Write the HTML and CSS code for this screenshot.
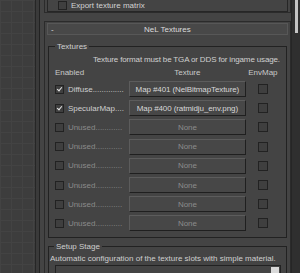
FILE: index.html
```html
<!DOCTYPE html>
<html lang="en">
<head>
    <meta charset="UTF-8" />
    <title>NeL Textures</title>
    <link rel="stylesheet" href="styles.css">
</head>
<body>
    <div class="screen">
        <div class="viewport"></div>
        <div class="strip"></div>
        <div class="panel">
            <div class="prev">
                <div class="prev-group">
                    <label class="opt"><span class="box"></span>Export texture matrix</label>
                </div>
            </div>
            <div class="rollout">
                <div class="roll-head"><span class="minus">-</span><span class="title">NeL Textures</span></div>
                <fieldset class="group textures">
                    <legend>Textures</legend>
                    <p class="info">Texture format must be TGA or DDS for ingame usage.</p>
                    <div class="slots">
                        <div class="col-head">Enabled</div>
                        <div class="col-head center">Texture</div>
                        <div class="col-head center">EnvMap</div>

                        <label class="opt on"><span class="box checked"></span>Diffuse..............</label>
                        <button class="map">Map #401 (NelBitmapTexture)</button>
                        <div class="env"><span class="box"></span></div>

                        <label class="opt on"><span class="box checked"></span>SpecularMap....</label>
                        <button class="map">Map #400 (ratmidju_env.png)</button>
                        <div class="env"><span class="box"></span></div>

                        <label class="opt"><span class="box"></span>Unused............</label>
                        <button class="map none">None</button>
                        <div class="env"><span class="box"></span></div>

                        <label class="opt"><span class="box"></span>Unused............</label>
                        <button class="map none">None</button>
                        <div class="env"><span class="box"></span></div>

                        <label class="opt"><span class="box"></span>Unused............</label>
                        <button class="map none">None</button>
                        <div class="env"><span class="box"></span></div>

                        <label class="opt"><span class="box"></span>Unused............</label>
                        <button class="map none">None</button>
                        <div class="env"><span class="box"></span></div>

                        <label class="opt"><span class="box"></span>Unused............</label>
                        <button class="map none">None</button>
                        <div class="env"><span class="box"></span></div>

                        <label class="opt"><span class="box"></span>Unused............</label>
                        <button class="map none">None</button>
                        <div class="env"><span class="box"></span></div>
                    </div>
                </fieldset>
                <fieldset class="group setup">
                    <legend>Setup Stage</legend>
                    <p class="auto">Automatic configuration of the texture slots with simple material.</p>
                    <div class="setup-row"><span class="knob"></span></div>
                </fieldset>
            </div>
        </div>
        <div class="scrollbar"><div class="thumb"></div></div>
    </div>
</body>
</html>
```

FILE: styles.css
```css
body {
    margin: 0;
    background: #444;
    color: #c8c8c8;
    font-family: "Liberation Sans", Arial, sans-serif;
    font-size: 8px;
    overflow: hidden;
}
.screen {
    display: flex;
    height: 273px;
    overflow: hidden;
}
.viewport {
    width: 39px;
    border-right: 1px solid #262626;
    background-color: #3d3d3d;
    background-image:
        linear-gradient(to right, #434343 1px, transparent 1px),
        linear-gradient(to bottom, #434343 1px, transparent 1px);
    background-size: 11px 11px;
}
.strip {
    width: 3px;
    background: #3a3a3a;
    border-right: 1px solid #222;
}
.panel {
    flex: 1;
    padding-left: 4px;
    display: flex;
    flex-direction: column;
}

/* previous rollout, scrolled mostly out of view */
.prev {
    height: 15px;
    border: 1px solid #2b2b2b;
    border-top: none;
    padding: 0 2px 0 2px;
    margin-bottom: 8px;
}
.prev-group {
    height: 11px;
    border: 1px solid #262626;
    border-top: none;
    padding-left: 10px;
}
.opt {
    display: flex;
    align-items: center;
    gap: 4px;
    color: #8a8a8a;
    white-space: nowrap;
}
.prev-group .opt {
    color: #d2d2d2;
    height: 11px;
}
.opt.on { color: #cfcfcf; }
.box {
    flex: none;
    display: inline-block;
    box-sizing: border-box;
    width: 9px;
    height: 9px;
    border: 1px solid #222;
    background: #3f3f3f;
    position: relative;
}
.box.checked::after {
    content: "";
    position: absolute;
    left: 2px;
    top: 0px;
    width: 2px;
    height: 4px;
    border: solid #e6e6e6;
    border-width: 0 1px 1px 0;
    transform: rotate(40deg);
}

/* NeL Textures rollout */
.rollout {
    flex: 1;
    border: 1px solid #2b2b2b;
    border-bottom: none;
    padding: 1px 2px 0 2px;
}
.roll-head {
    box-sizing: border-box;
    height: 12px;
    border: 1px solid #575757;
    background: #484848;
    display: flex;
    align-items: center;
    position: relative;
    color: #dcdcdc;
}
.minus {
    padding-left: 3px;
}
.title {
    position: absolute;
    left: 0;
    right: 0;
    text-align: center;
}
.group {
    margin: 7px 1px 0 1px;
    padding: 0 6px 0 6px;
    border: 1px solid #222;
    min-width: 0;
}
.group legend {
    padding: 0 2px;
    margin-left: 0;
    color: #cfcfcf;
}
.info {
    margin: 4px 0 0 0;
    text-align: right;
    color: #d0d0d0;
    letter-spacing: -0.15px;
}
.slots {
    display: grid;
    grid-template-columns: 74px 117px 34px;
    grid-template-rows: 12px;
    grid-auto-rows: 16.2px;
    row-gap: 3px;
    align-items: center;
    margin-top: 2px;
    padding-bottom: 5px;
}
.col-head {
    color: #c8c8c8;
    margin-bottom: -1px;
}
.col-head.center { text-align: center; }
.map {
    height: 16px;
    margin: 0;
    padding: 0;
    font: inherit;
    letter-spacing: -0.1px;
    color: #d8d8d8;
    background: #474747;
    border: 1px solid;
    border-color: #5c5c5c #1f1f1f #1f1f1f #5c5c5c;
    white-space: nowrap;
}
.map.none { color: #8c8c8c; }
.env {
    display: flex;
    justify-content: center;
}
.env .box {
    width: 10px;
    height: 10px;
    margin-left: 1px;
}
.setup {
    margin-top: 4px;
    padding: 0;
    flex: 1;
}
.setup legend { margin-left: 5px; }
.auto {
    margin: 3px 0 0 1px;
    color: #d0d0d0;
    white-space: nowrap;
}
.setup-row {
    margin: 2px 5px 0 6px;
    height: 10px;
    border: 1px solid #222;
    border-bottom: none;
    display: flex;
    justify-content: flex-end;
}
.knob {
    width: 8px;
    height: 8px;
    margin: 1px 1px 0 0;
    background: #d8d8d8;
}
.scrollbar {
    width: 9px;
    background: #2f2f2f;
    border-left: 1px solid #262626;
}
.thumb {
    width: 3px;
    height: 33px;
    margin-left: 3px;
    background: #c4c4c4;
}
```
